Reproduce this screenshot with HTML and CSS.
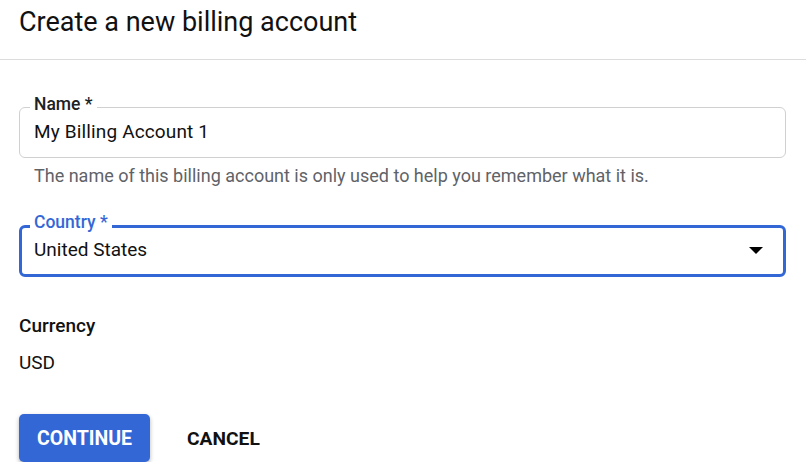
FILE: index.html
```html
<!DOCTYPE html>
<html lang="en">
<head>
<meta charset="utf-8">
<title>Create a new billing account</title>
<link rel="stylesheet" href="styles.css">
</head>
<body>
<header class="page-header">
  <h1 class="page-title">Create a new billing account</h1>
</header>
<main class="form">
  <fieldset class="field">
    <legend class="field-label">Name *</legend>
    <div class="field-value name-value">My Billing Account 1</div>
  </fieldset>
  <p class="hint">The name of this billing account is only used to help you remember what it is.</p>

  <fieldset class="field field-focused">
    <legend class="field-label">Country *</legend>
    <div class="field-value select-row">
      <span>United States</span>
      <svg class="caret" width="14" height="7" viewBox="0 0 14 7"><path d="M0 0h14L7 7z" fill="#000"/></svg>
    </div>
  </fieldset>

  <section class="info">
    <h2 class="info-label">Currency</h2>
    <div class="info-value">USD</div>
  </section>

  <div class="actions">
    <button class="btn btn-primary">CONTINUE</button>
    <button class="btn btn-text">CANCEL</button>
  </div>
</main>
</body>
</html>
```

FILE: styles.css
```css
* { box-sizing: border-box; }
html, body { margin: 0; padding: 0; background: #fff; }
body {
  font-family: Roboto, "Noto Sans", Arial, sans-serif;
  color: #000;
}
.page-header {
  height: 60px;
  border-bottom: 1px solid #dcdcdc;
  padding: 5px 19px 0;
}
.page-title {
  margin: 0;
  font-size: 27px;
  font-weight: 400;
  line-height: 34px;
  color: #111;
}
.form {
  padding: 34px 20px 0 19px;
}
.field {
  margin: 0;
  padding: 0 14px 0 14px;
  border: 1px solid #d0d0d0;
  border-radius: 6px;
  height: 64px;
  min-width: 0;
}
.field-label {
  padding: 0 4px 6px;
  margin-left: -4px;
  font-size: 17.5px;
  font-weight: 500;
  line-height: 20px;
  color: #202124;
}
.field-value {
  font-size: 19px;
  line-height: 24px;
  margin-top: 0;
  color: #111;
}
.name-value {
  letter-spacing: 0.15px;
}
.hint {
  margin: 6px 0 0 15px;
  font-size: 18px;
  line-height: 24px;
  color: #5f6368;
}
.field-focused {
  margin-top: 24px;
  height: 65px;
  border: 3px solid #3367d6;
  padding: 0 12px;
}
.field-focused .field-label {
  padding-bottom: 8px;
  color: #3367d6;
}
.field-focused .field-value {
  margin-top: -2px;
}
.select-row {
  display: flex;
  align-items: center;
  justify-content: space-between;
  padding-right: 8px;
}
.caret { display: block; }
.info {
  margin-top: 37px;
}
.info-label {
  margin: 0;
  font-size: 19px;
  font-weight: 500;
  line-height: 24px;
  color: #111;
}
.info-value {
  margin-top: 13px;
  font-size: 19px;
  line-height: 24px;
  color: #111;
}
.actions {
  margin-top: 39px;
  display: flex;
  gap: 19px;
}
.btn {
  height: 48px;
  padding: 0 18px;
  border: 0;
  border-radius: 5px;
  font-family: inherit;
  font-size: 19.5px;
  font-weight: 700;
  background: transparent;
  color: #111;
  cursor: pointer;
}
.btn-text {
  font-size: 19.2px;
}
.btn-primary {
  background: #3367d6;
  color: #fff;
  box-shadow: 0 2px 4px rgba(0,0,0,0.3);
}
```
